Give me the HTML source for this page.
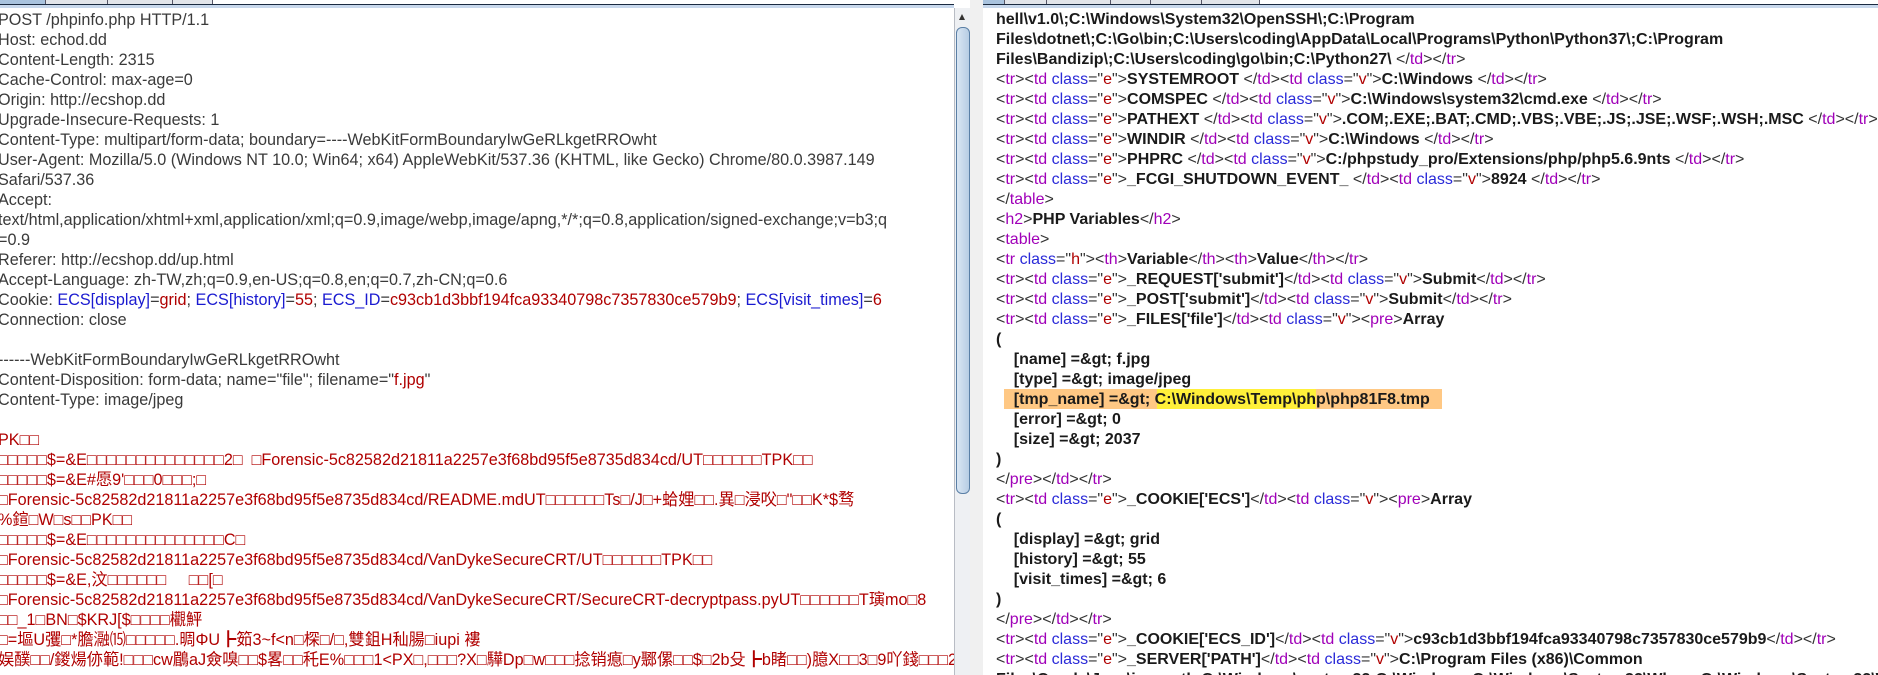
<!DOCTYPE html>
<html><head><meta charset="utf-8">
<style>
html,body{margin:0;padding:0;width:1878px;height:675px;overflow:hidden;background:#fff;}
body{position:relative;font-family:"Liberation Sans","Noto Sans CJK TC",sans-serif;font-size:16px;}
.pane{position:absolute;top:0;height:675px;overflow:hidden;background:#fff;}
.txt{position:absolute;top:10px;white-space:pre;line-height:20px;}
#L{left:0;width:954px;}
#L .txt{left:-2px;color:#3a3a3a;font-size:16.2px;}
#R{left:983px;width:895px;}
.b{color:#1a1ad0}.r{color:#b00000}
.t{color:#a000b8;font-weight:normal}.a{color:#2a2ad8;font-weight:normal}.q{color:#b00000;font-weight:normal}.n{font-weight:normal;color:#333}
.tabs{position:absolute;top:0;height:4px;border-bottom:1px solid #1a2a40;}
.tabs:after{content:"";position:absolute;left:0;right:0;top:5px;height:3px;background:#c8d8ec;}
.tab{position:absolute;top:0;height:4px;background:#e2e5ea;border-right:1px solid #556;}
.sb{position:absolute;left:954px;top:8px;width:15px;height:667px;background:#eef0f3;border-left:1px solid #b8bcc4;}
.thumb{position:absolute;left:1px;top:19px;width:12px;height:465px;border:1px solid #5a7fa6;border-radius:6px;background:linear-gradient(90deg,#d9e6f3,#b7cde4);}
.gap{position:absolute;left:970px;top:0;width:13px;height:675px;background:#f0f0f0;border-right:2px solid #dcdcdc;}
.hl{position:absolute;left:1004px;top:389px;width:438px;height:20px;background:#ffc884;}
.hy{position:absolute;left:1157px;top:389px;width:159px;height:20px;background:#fff03a;}
</style></head><body>
<div class="pane" id="L">
<div class="tabs" style="left:0;width:954px"></div>
<div class="tab" style="left:0;width:45px;background:#a9c3de"></div>
<div class="tab" style="left:46px;width:61px"></div>
<div class="tab" style="left:108px;width:64px"></div>
<div class="tab" style="left:173px;width:39px"></div>
<div class="txt">POST /phpinfo.php HTTP/1.1
Host: echod.dd
Content-Length: 2315
Cache-Control: max-age=0
Origin: http://ecshop.dd
Upgrade-Insecure-Requests: 1
Content-Type: multipart/form-data; boundary=----WebKitFormBoundaryIwGeRLkgetRROwht
User-Agent: Mozilla/5.0 (Windows NT 10.0; Win64; x64) AppleWebKit/537.36 (KHTML, like Gecko) Chrome/80.0.3987.149
Safari/537.36
Accept:
text/html,application/xhtml+xml,application/xml;q=0.9,image/webp,image/apng,*/*;q=0.8,application/signed-exchange;v=b3;q
=0.9
Referer: http://ecshop.dd/up.html
Accept-Language: zh-TW,zh;q=0.9,en-US;q=0.8,en;q=0.7,zh-CN;q=0.6
Cookie: <span class="b">ECS[display]</span>=<span class="r">grid</span>; <span class="b">ECS[history]</span>=<span class="r">55</span>; <span class="b">ECS_ID</span>=<span class="r">c93cb1d3bbf194fca93340798c7357830ce579b9</span>; <span class="b">ECS[visit_times]</span>=<span class="r">6</span>
Connection: close

------WebKitFormBoundaryIwGeRLkgetRROwht
Content-Disposition: form-data; name="file"; filename="<span class="r">f.jpg</span>"
Content-Type: image/jpeg

<span class="r">PK□□
□□□□□$=&amp;E□□□□□□□□□□□□□□2□  □Forensic-5c82582d21811a2257e3f68bd95f5e8735d834cd/UT□□□□□□TPK□□
□□□□□$=&amp;E#愿9'□□□0□□□;□
□Forensic-5c82582d21811a2257e3f68bd95f5e8735d834cd/README.mdUT□□□□□□Ts□/J□+蛤娌□□.異□浸㕮□"□□K*$骛
%鍹□W□s□□PK□□
□□□□□$=&amp;E□□□□□□□□□□□□□□C□
□Forensic-5c82582d21811a2257e3f68bd95f5e8735d834cd/VanDykeSecureCRT/UT□□□□□□TPK□□
□□□□□$=&amp;E,汶□□□□□□     □□[□
□Forensic-5c82582d21811a2257e3f68bd95f5e8735d834cd/VanDykeSecureCRT/SecureCRT-decryptpass.pyUT□□□□□□T璌mo□8
□□_1□BN□$KRJ[$□□□□欟鮃
□=塸U彏□*膽瀜⒂□□□□□.晭ΦU┣筎3~f&lt;n□棎□/□,雙鉏H秈腸□iupi 褸
娱醭□□/鍐煬㑊範!□□□cw鶥aJ僉嗅□□$畧□□秅E%□□□1&lt;PX□,□□□?X□驊Dp□w□□□捻销瘜□y鄹傫□□$□2b殳┣b睹□□)臆X□□3□9吖錢□□□2□
□□□□□□□□□□□□□□□□□□□□□□□□□□□□□□□□□□□□□□□□□□□□□□□□□□□□□□□□</span></div>
</div>
<div class="sb"><div style="position:absolute;left:4px;top:6px;width:0;height:0;border-left:3px solid transparent;border-right:3px solid transparent;border-bottom:6px solid #333"></div><div class="thumb"></div></div>
<div class="gap"></div>
<div class="pane" id="R">
<div class="tabs" style="left:0;width:895px"></div>
<div class="tab" style="left:0;width:21px;background:#a9c3de"></div>
<div class="tab" style="left:22px;width:41px"></div>
<div class="tab" style="left:64px;width:63px"></div>
<div class="tab" style="left:128px;width:39px"></div>
<div class="tab" style="left:168px;width:50px"></div>
<div class="tab" style="left:219px;width:57px"></div>
</div>
<div class="hl"></div><div class="hy"></div>
<div class="pane" id="R2" style="left:983px;width:895px;background:transparent">
<div class="txt" style="left:13px;top:10px;color:#1a1a1a;font-weight:bold;">hell\v1.0\;C:\Windows\System32\OpenSSH\;C:\Program
Files\dotnet\;C:\Go\bin;C:\Users\coding\AppData\Local\Programs\Python\Python37\;C:\Program
Files\Bandizip\;C:\Users\coding\go\bin;C:\Python27\ <span class="n">&lt;/</span><span class="t">td</span><span class="n">&gt;&lt;/</span><span class="t">tr</span><span class="n">&gt;</span>
<span class="n">&lt;</span><span class="t">tr</span><span class="n">&gt;&lt;</span><span class="t">td</span> <span class="a">class</span><span class="n">="</span><span class="q">e</span><span class="n">"&gt;</span>SYSTEMROOT <span class="n">&lt;/</span><span class="t">td</span><span class="n">&gt;&lt;</span><span class="t">td</span> <span class="a">class</span><span class="n">="</span><span class="q">v</span><span class="n">"&gt;</span>C:\Windows <span class="n">&lt;/</span><span class="t">td</span><span class="n">&gt;&lt;/</span><span class="t">tr</span><span class="n">&gt;</span>
<span class="n">&lt;</span><span class="t">tr</span><span class="n">&gt;&lt;</span><span class="t">td</span> <span class="a">class</span><span class="n">="</span><span class="q">e</span><span class="n">"&gt;</span>COMSPEC <span class="n">&lt;/</span><span class="t">td</span><span class="n">&gt;&lt;</span><span class="t">td</span> <span class="a">class</span><span class="n">="</span><span class="q">v</span><span class="n">"&gt;</span>C:\Windows\system32\cmd.exe <span class="n">&lt;/</span><span class="t">td</span><span class="n">&gt;&lt;/</span><span class="t">tr</span><span class="n">&gt;</span>
<span class="n">&lt;</span><span class="t">tr</span><span class="n">&gt;&lt;</span><span class="t">td</span> <span class="a">class</span><span class="n">="</span><span class="q">e</span><span class="n">"&gt;</span>PATHEXT <span class="n">&lt;/</span><span class="t">td</span><span class="n">&gt;&lt;</span><span class="t">td</span> <span class="a">class</span><span class="n">="</span><span class="q">v</span><span class="n">"&gt;</span>.COM;.EXE;.BAT;.CMD;.VBS;.VBE;.JS;.JSE;.WSF;.WSH;.MSC <span class="n">&lt;/</span><span class="t">td</span><span class="n">&gt;&lt;/</span><span class="t">tr</span><span class="n">&gt;</span>
<span class="n">&lt;</span><span class="t">tr</span><span class="n">&gt;&lt;</span><span class="t">td</span> <span class="a">class</span><span class="n">="</span><span class="q">e</span><span class="n">"&gt;</span>WINDIR <span class="n">&lt;/</span><span class="t">td</span><span class="n">&gt;&lt;</span><span class="t">td</span> <span class="a">class</span><span class="n">="</span><span class="q">v</span><span class="n">"&gt;</span>C:\Windows <span class="n">&lt;/</span><span class="t">td</span><span class="n">&gt;&lt;/</span><span class="t">tr</span><span class="n">&gt;</span>
<span class="n">&lt;</span><span class="t">tr</span><span class="n">&gt;&lt;</span><span class="t">td</span> <span class="a">class</span><span class="n">="</span><span class="q">e</span><span class="n">"&gt;</span>PHPRC <span class="n">&lt;/</span><span class="t">td</span><span class="n">&gt;&lt;</span><span class="t">td</span> <span class="a">class</span><span class="n">="</span><span class="q">v</span><span class="n">"&gt;</span>C:/phpstudy_pro/Extensions/php/php5.6.9nts <span class="n">&lt;/</span><span class="t">td</span><span class="n">&gt;&lt;/</span><span class="t">tr</span><span class="n">&gt;</span>
<span class="n">&lt;</span><span class="t">tr</span><span class="n">&gt;&lt;</span><span class="t">td</span> <span class="a">class</span><span class="n">="</span><span class="q">e</span><span class="n">"&gt;</span>_FCGI_SHUTDOWN_EVENT_ <span class="n">&lt;/</span><span class="t">td</span><span class="n">&gt;&lt;</span><span class="t">td</span> <span class="a">class</span><span class="n">="</span><span class="q">v</span><span class="n">"&gt;</span>8924 <span class="n">&lt;/</span><span class="t">td</span><span class="n">&gt;&lt;/</span><span class="t">tr</span><span class="n">&gt;</span>
<span class="n">&lt;/</span><span class="t">table</span><span class="n">&gt;</span>
<span class="n">&lt;</span><span class="t">h2</span><span class="n">&gt;</span>PHP Variables<span class="n">&lt;/</span><span class="t">h2</span><span class="n">&gt;</span>
<span class="n">&lt;</span><span class="t">table</span><span class="n">&gt;</span>
<span class="n">&lt;</span><span class="t">tr</span> <span class="a">class</span><span class="n">="</span><span class="q">h</span><span class="n">"&gt;&lt;</span><span class="t">th</span><span class="n">&gt;</span>Variable<span class="n">&lt;/</span><span class="t">th</span><span class="n">&gt;&lt;</span><span class="t">th</span><span class="n">&gt;</span>Value<span class="n">&lt;/</span><span class="t">th</span><span class="n">&gt;&lt;/</span><span class="t">tr</span><span class="n">&gt;</span>
<span class="n">&lt;</span><span class="t">tr</span><span class="n">&gt;&lt;</span><span class="t">td</span> <span class="a">class</span><span class="n">="</span><span class="q">e</span><span class="n">"&gt;</span>_REQUEST['submit']<span class="n">&lt;/</span><span class="t">td</span><span class="n">&gt;&lt;</span><span class="t">td</span> <span class="a">class</span><span class="n">="</span><span class="q">v</span><span class="n">"&gt;</span>Submit<span class="n">&lt;/</span><span class="t">td</span><span class="n">&gt;&lt;/</span><span class="t">tr</span><span class="n">&gt;</span>
<span class="n">&lt;</span><span class="t">tr</span><span class="n">&gt;&lt;</span><span class="t">td</span> <span class="a">class</span><span class="n">="</span><span class="q">e</span><span class="n">"&gt;</span>_POST['submit']<span class="n">&lt;/</span><span class="t">td</span><span class="n">&gt;&lt;</span><span class="t">td</span> <span class="a">class</span><span class="n">="</span><span class="q">v</span><span class="n">"&gt;</span>Submit<span class="n">&lt;/</span><span class="t">td</span><span class="n">&gt;&lt;/</span><span class="t">tr</span><span class="n">&gt;</span>
<span class="n">&lt;</span><span class="t">tr</span><span class="n">&gt;&lt;</span><span class="t">td</span> <span class="a">class</span><span class="n">="</span><span class="q">e</span><span class="n">"&gt;</span>_FILES['file']<span class="n">&lt;/</span><span class="t">td</span><span class="n">&gt;&lt;</span><span class="t">td</span> <span class="a">class</span><span class="n">="</span><span class="q">v</span><span class="n">"&gt;&lt;</span><span class="t">pre</span><span class="n">&gt;</span>Array
(
    [name] =&amp;gt; f.jpg
    [type] =&amp;gt; image/jpeg
    [tmp_name] =&amp;gt; C:\Windows\Temp\php\php81F8.tmp
    [error] =&amp;gt; 0
    [size] =&amp;gt; 2037
)
<span class="n">&lt;/</span><span class="t">pre</span><span class="n">&gt;&lt;/</span><span class="t">td</span><span class="n">&gt;&lt;/</span><span class="t">tr</span><span class="n">&gt;</span>
<span class="n">&lt;</span><span class="t">tr</span><span class="n">&gt;&lt;</span><span class="t">td</span> <span class="a">class</span><span class="n">="</span><span class="q">e</span><span class="n">"&gt;</span>_COOKIE['ECS']<span class="n">&lt;/</span><span class="t">td</span><span class="n">&gt;&lt;</span><span class="t">td</span> <span class="a">class</span><span class="n">="</span><span class="q">v</span><span class="n">"&gt;&lt;</span><span class="t">pre</span><span class="n">&gt;</span>Array
(
    [display] =&amp;gt; grid
    [history] =&amp;gt; 55
    [visit_times] =&amp;gt; 6
)
<span class="n">&lt;/</span><span class="t">pre</span><span class="n">&gt;&lt;/</span><span class="t">td</span><span class="n">&gt;&lt;/</span><span class="t">tr</span><span class="n">&gt;</span>
<span class="n">&lt;</span><span class="t">tr</span><span class="n">&gt;&lt;</span><span class="t">td</span> <span class="a">class</span><span class="n">="</span><span class="q">e</span><span class="n">"&gt;</span>_COOKIE['ECS_ID']<span class="n">&lt;/</span><span class="t">td</span><span class="n">&gt;&lt;</span><span class="t">td</span> <span class="a">class</span><span class="n">="</span><span class="q">v</span><span class="n">"&gt;</span>c93cb1d3bbf194fca93340798c7357830ce579b9<span class="n">&lt;/</span><span class="t">td</span><span class="n">&gt;&lt;/</span><span class="t">tr</span><span class="n">&gt;</span>
<span class="n">&lt;</span><span class="t">tr</span><span class="n">&gt;&lt;</span><span class="t">td</span> <span class="a">class</span><span class="n">="</span><span class="q">e</span><span class="n">"&gt;</span>_SERVER['PATH']<span class="n">&lt;/</span><span class="t">td</span><span class="n">&gt;&lt;</span><span class="t">td</span> <span class="a">class</span><span class="n">="</span><span class="q">v</span><span class="n">"&gt;</span>C:\Program Files (x86)\Common
Files\Oracle\Java\javapath;C:\Windows\system32;C:\Windows;C:\Windows\System32\Wbem;C:\Windows\System32\Wi</div>
</div>
</body></html>
